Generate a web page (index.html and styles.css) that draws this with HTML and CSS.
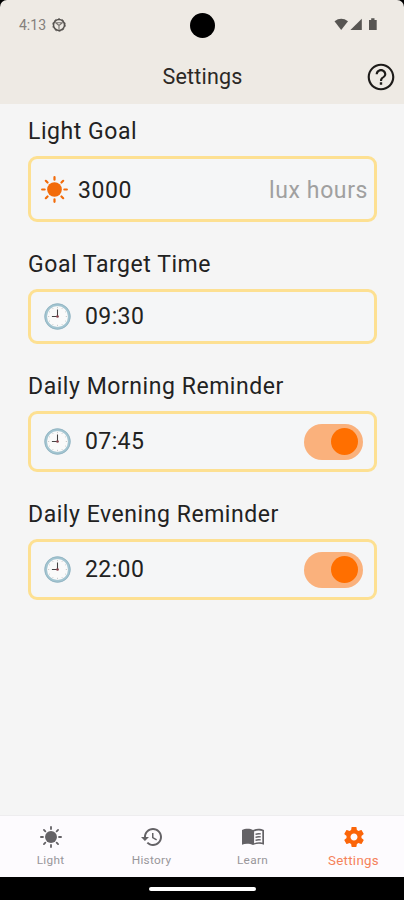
FILE: index.html
```html
<!DOCTYPE html>
<html lang="en">
<head>
<meta charset="utf-8">
<title>Settings</title>
<link rel="stylesheet" href="styles.css">
</head>
<body>
<svg class="defs" aria-hidden="true">
  <symbol id="sun" viewBox="0 0 28 28">
    <circle cx="14" cy="14" r="7.6" fill="currentColor"/>
    <path d="M14 1.200v2.600M14 24.200v2.600M1.200 14h2.600M24.200 14h2.600M5 5l1.800 1.800M21.200 21.200L23 23M5 23l1.800-1.800M21.200 6.800L23 5" stroke="currentColor" stroke-width="2.300" stroke-linecap="round"/>
  </symbol>
  <symbol id="clock" viewBox="0 0 28 28">
    <circle cx="14" cy="14" r="12.2" fill="#fafafa" stroke="#a3c5d1" stroke-width="2.6"/>
    <circle cx="14" cy="14" r="13.3" fill="none" stroke="#87acba" stroke-width=".7"/>
    <path d="M14 4v1.4M14 22.6V24M22.6 14H24M4 14h1.4M19 5.3l-.5.9M22.7 9l-.9.5M22.7 19l-.9-.5M19 22.7l-.5-.9M9 22.7l.5-.9M5.3 19l.9-.5M5.3 9l.9.5M9 5.3l.5.9" stroke="#c4c4c4" stroke-width=".9"/>
    <path d="M14 14V6.8M14 14H8.2" stroke="#444" stroke-width="1.1"/>
    <circle cx="14" cy="14" r="1.4" fill="#8c4650"/>
  </symbol>
</svg>
<div class="screen">
  <header class="top">
    <div class="status">
      <div class="status-left">
        <span>4:13</span>
        <svg class="debug" viewBox="0 0 14 14"><circle cx="7" cy="7" r="5.5" fill="none" stroke="#55524f" stroke-width="1.5"/><path d="M3 4.8h8M7 7v4.5M4 5l3 2.5L10 5" fill="none" stroke="#77736f" stroke-width="1.1"/><circle cx="7" cy="7" r="6.3" fill="none" stroke="#55524f" stroke-width=".8" stroke-dasharray="2 2"/></svg>
      </div>
      <div class="camera"></div>
      <svg class="signals" viewBox="0 0 44 14"><g fill="#575552"><path d="M.5 3.2Q7.2-1.6 14 3.2L7.2 12z"/><path d="M27.8.8V12H16.4z"/><path d="M35 2h2.200V.3h3.300V2h2.200v10H35z"/></g></svg>
    </div>
    <div class="appbar">
      <h1>Settings</h1>
      <svg class="help" viewBox="0 0 24 24"><path fill="#1d1b19" d="M11.100 17.800h1.800V16h-1.800v1.800zM12 2C6.480 2 2 6.480 2 12s4.480 10 10 10 10-4.480 10-10S17.520 2 12 2zm0 18.400c-4.600 0-8.400-3.800-8.400-8.400S7.400 3.600 12 3.600s8.400 3.800 8.400 8.400-3.800 8.400-8.400 8.400zM12 6c-2.210 0-4 1.790-4 4h1.600c0-1.300 1.050-2.400 2.400-2.400s2.400 1.100 2.400 2.400c0 2-3.200 1.750-3.200 5h1.600c0-2.250 3.200-2.500 3.200-5 0-2.210-1.790-4-4-4z"/></svg>
    </div>
  </header>

  <main>
    <section>
      <h2>Light Goal</h2>
      <div class="card goal">
        <svg class="sun"><use href="#sun"/></svg>
        <span class="value">3000</span>
        <span class="unit">lux hours</span>
      </div>
    </section>
    <section>
      <h2>Goal Target Time</h2>
      <div class="card target">
        <svg class="clock"><use href="#clock"/></svg>
        <span class="value">09:30</span>
      </div>
    </section>
    <section>
      <h2>Daily Morning Reminder</h2>
      <div class="card">
        <svg class="clock"><use href="#clock"/></svg>
        <span class="value">07:45</span>
        <span class="toggle"><i></i></span>
      </div>
    </section>
    <section>
      <h2>Daily Evening Reminder</h2>
      <div class="card">
        <svg class="clock"><use href="#clock"/></svg>
        <span class="value">22:00</span>
        <span class="toggle"><i></i></span>
      </div>
    </section>
  </main>

  <nav>
    <div class="tab"><svg class="tab-sun"><use href="#sun"/></svg><span>Light</span></div>
    <div class="tab"><svg viewBox="0 0 24 24"><path fill="currentColor" d="M13 3c-4.970 0-9 4.030-9 9H1l3.890 3.890.07.14L9 12H6c0-3.870 3.130-7 7-7s7 3.130 7 7-3.130 7-7 7c-1.930 0-3.680-.79-4.940-2.060l-1.420 1.420C8.270 19.990 10.510 21 13 21c4.970 0 9-4.030 9-9s-4.030-9-9-9zm-1 5v5l4.280 2.540.72-1.210-3.500-2.080V8H12z"/></svg><span>History</span></div>
    <div class="tab"><svg viewBox="0 0 24 24"><path fill="currentColor" d="M12 5C9 3.300 4 3.500 1 5v14.700c3-1.300 8-1.300 11 .4 3-1.700 8-1.700 11-.4V5c-3-1.500-8-1.700-11 0zm9.300 12.700c-2.700-.7-5.700-.5-8.200.6V6.500c2.500-1.200 5.500-1.300 8.200-.5z"/><path fill="none" stroke="currentColor" stroke-width="1.400" d="M14.500 9.300c1.600-.6 3.500-.7 5.300-.4M14.500 12.300c1.600-.6 3.500-.7 5.300-.4M14.500 15.300c1.600-.6 3.500-.7 5.300-.4"/></svg><span>Learn</span></div>
    <div class="tab active"><svg viewBox="0 0 24 24"><path fill="currentColor" d="M19.430 12.980c.04-.32.07-.64.07-.98s-.03-.66-.07-.98l2.110-1.650c.19-.15.24-.42.12-.64l-2-3.460c-.12-.22-.39-.3-.61-.22l-2.490 1c-.52-.4-1.080-.73-1.690-.98l-.38-2.650C14.460 2.180 14.250 2 14 2h-4c-.25 0-.46.18-.49.42l-.38 2.650c-.61.25-1.170.59-1.690.98l-2.490-1c-.23-.09-.49 0-.61.22l-2 3.460c-.13.22-.07.49.12.64l2.110 1.650c-.04.32-.07.65-.07.98s.03.66.07.98l-2.110 1.650c-.19.15-.24.42-.12.64l2 3.460c.12.22.39.3.61.22l2.490-1c.52.4 1.080.73 1.690.98l.38 2.650c.03.24.24.42.49.42h4c.25 0 .46-.18.49-.42l.38-2.650c.61-.25 1.170-.59 1.690-.98l2.490 1c.23.09.49 0 .61-.22l2-3.460c.12-.22.07-.49-.12-.64l-2.110-1.650zM12 15.500c-1.930 0-3.500-1.570-3.500-3.500s1.570-3.500 3.500-3.500 3.500 1.570 3.500 3.500-1.570 3.500-3.500 3.500z"/></svg><span>Settings</span></div>
  </nav>
  <footer><div class="handle"></div></footer>
</div>
</body>
</html>
```

FILE: styles.css
```css
* { box-sizing: border-box; }
body { margin: 0; background: #000; font-family: Roboto, "Liberation Sans", sans-serif; }
.defs { display: none; }
svg { display: block; flex: none; }
.screen { width: 404px; height: 900px; display: flex; flex-direction: column; background: #000; }

.top { height: 104px; background: #eeeae4; border-radius: 7px 7px 0 0; }
.status { height: 50px; padding: 0 26px 0 19px; display: grid; grid-template-columns: 1fr 25px 1fr; align-items: center; }
.status-left { display: flex; align-items: center; gap: 6px; color: #84807c; font-size: 14px; }
.debug { width: 14px; height: 14px; }
.camera { width: 25px; height: 25px; border-radius: 50%; background: #000; justify-self: center; margin-left: 7px; }
.signals { width: 44px; height: 14px; justify-self: end; }
.appbar { height: 54px; padding: 0 7px 0 40px; display: grid; grid-template-columns: 1fr 32px; align-items: center; }
h1 { margin: 0; font-size: 21.5px; line-height: 28px; font-weight: 400; letter-spacing: .2px; text-align: center; color: #2b2825; }
.help { width: 32px; height: 32px; }

main { height: 711px; padding: 14px 27px 0 28px; background: #f5f5f5; display: flex; flex-direction: column; gap: 29px; }
h2 { margin: 0 0 10px; font-size: 23px; line-height: 28px; font-weight: 400; letter-spacing: .55px; color: #222; white-space: nowrap; }
.card { height: 61px; padding: 0 11px 0 13px; border: 3px solid #fde092; border-radius: 9px; display: flex; align-items: center; background: #f5f6f7; }
.goal { height: 66px; padding: 0 6px 0 10px; }
.target { height: 55px; }
.sun { width: 27px; height: 27px; color: #f26b0a; margin-right: 10px; }
.clock { width: 27px; height: 27px; margin-right: 14px; }
.value { font-size: 23px; line-height: 28px; letter-spacing: .4px; color: #222; padding-top: 1px; }
.goal .value, .goal .unit { padding-top: 4px; letter-spacing: .6px; }
.unit { margin-left: auto; font-size: 23px; line-height: 28px; color: #a0a0a0; }
.toggle { margin-left: auto; width: 59px; height: 36px; padding: 4px 5px; border-radius: 18px; background: #fab17c; display: flex; justify-content: flex-end; align-items: center; }
.toggle i { width: 27px; height: 27px; border-radius: 50%; background: #ff6f00; }

nav { height: 62px; background: #fdfbfe; border-top: 1px solid #eeedef; display: grid; grid-template-columns: repeat(4, 1fr); }
.tab { display: flex; flex-direction: column; align-items: center; padding-top: 9px; color: #646266; }
.tab svg { width: 24px; height: 24px; }
.tab .tab-sun { width: 22px; height: 22px; margin: 1px 0; }
.tab span { margin-top: 4px; font-size: 11.8px; line-height: 14px; letter-spacing: .3px; color: #98969a; }
.tab.active { color: #fb6509; }
.tab.active span { margin-top: 5px; font-size: 13.3px; color: #f5825a; }
footer { height: 23px; display: flex; justify-content: center; align-items: center; }
.handle { width: 107px; height: 4px; border-radius: 2px; background: #fff; }
```
